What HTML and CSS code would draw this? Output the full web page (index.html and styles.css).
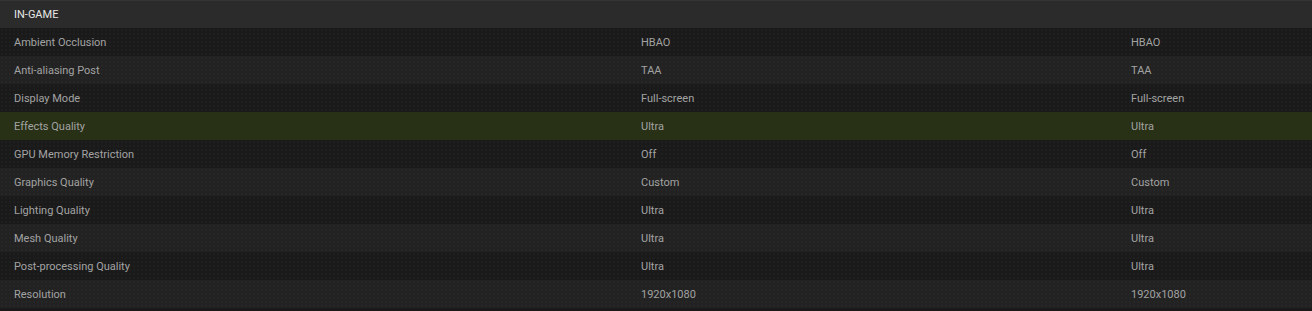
FILE: index.html
```html
<!DOCTYPE html>
<html>
<head>
<meta charset="utf-8">
<link rel="stylesheet" href="styles.css">
</head>
<body>
<div class="table">
  <div class="head">IN-GAME</div>
  <div class="row"><span>Ambient Occlusion</span><span>HBAO</span><span>HBAO</span></div>
  <div class="row alt"><span>Anti-aliasing Post</span><span>TAA</span><span>TAA</span></div>
  <div class="row"><span>Display Mode</span><span>Full-screen</span><span>Full-screen</span></div>
  <div class="row hl"><span>Effects Quality</span><span>Ultra</span><span>Ultra</span></div>
  <div class="row"><span>GPU Memory Restriction</span><span>Off</span><span>Off</span></div>
  <div class="row alt"><span>Graphics Quality</span><span>Custom</span><span>Custom</span></div>
  <div class="row"><span>Lighting Quality</span><span>Ultra</span><span>Ultra</span></div>
  <div class="row alt"><span>Mesh Quality</span><span>Ultra</span><span>Ultra</span></div>
  <div class="row"><span>Post-processing Quality</span><span>Ultra</span><span>Ultra</span></div>
  <div class="row alt"><span>Resolution</span><span>1920x1080</span><span>1920x1080</span></div>
</div>
</body>
</html>
```
FILE: styles.css
```css
html, body {
  margin: 0;
  padding: 0;
  background: #1a1a1a;
}
body {
  font-family: Roboto, "Liberation Sans", sans-serif;
  font-size: 11px;
}
.table {
  display: flex;
  flex-direction: column;
  background-color: #1a1a1a;
  background-image: radial-gradient(circle, rgba(255,255,255,0.025) 1px, transparent 1.5px);
  background-size: 4px 4px;
}
.head {
  height: 27px;
  border-top: 1px solid #353535;
  background: #2b2b2b;
  color: #e6e6e6;
  padding-left: 14px;
  display: flex;
  align-items: center;
}
.row {
  height: 28px;
  display: grid;
  grid-template-columns: 627px 490px 1fr;
  align-items: center;
  padding-left: 14px;
  color: #a3a3a3;
}
.row.alt {
  background: rgba(255,255,255,0.035);
}
.row.hl {
  background: #283016;
}
```
